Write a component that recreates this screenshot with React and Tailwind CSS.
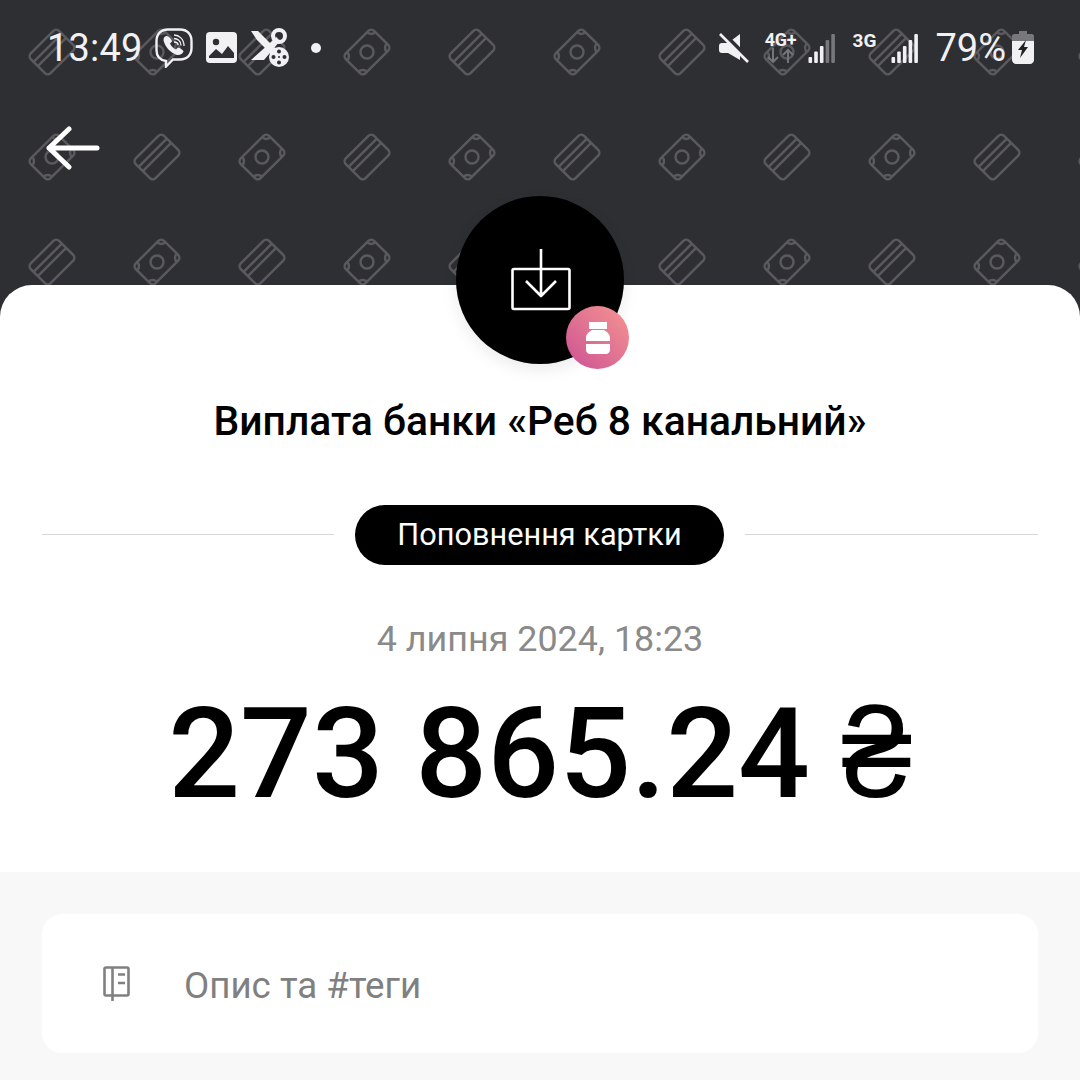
import { useId } from "react";

const ink = "#f1f1f4";

function CardShape({ cx, cy }) {
  return (
    <g transform={`translate(${cx} ${cy}) rotate(-45)`} fill="none" stroke="#59595e" strokeWidth="2.4">
      <rect x="-20" y="-14" width="40" height="28" rx="4" />
      <path d="M-20 -6H20M-20 0H20" />
    </g>
  );
}

function MoneyShape({ cx, cy }) {
  return (
    <g transform={`translate(${cx} ${cy}) rotate(-45)`} fill="none" stroke="#59595e" strokeWidth="2.4">
      <rect x="-20" y="-14" width="40" height="28" rx="4" />
      <circle r="6.500" />
      <path d="M-20 -8A6 6 0 0 0 -14 -14M14 -14A6 6 0 0 0 20 -8M20 8A6 6 0 0 0 14 14M-14 14A6 6 0 0 0 -20 8" />
    </g>
  );
}

function Pattern() {
  const id = useId();
  return (
    <svg className="absolute left-0 top-0 h-[300px] w-full" aria-hidden="true">
      <defs>
        <pattern id={id} width="210" height="210" patternUnits="userSpaceOnUse">
          <CardShape cx={52} cy={52} />
          <MoneyShape cx={157} cy={52} />
          <MoneyShape cx={52} cy={157} />
          <CardShape cx={157} cy={157} />
        </pattern>
      </defs>
      <rect width="100%" height="100%" fill={`url(#${id})`} />
    </svg>
  );
}

function Signal({ dim }) {
  const off = dim ? "#77787b" : ink;
  return (
    <svg width="29" height="30" viewBox="0 0 29 30">
      <rect x="0.500" y="24" width="3.600" height="6" rx="1" fill={ink} />
      <rect x="6.200" y="18.500" width="3.600" height="11.500" rx="1" fill={ink} />
      <rect x="11.900" y="13" width="3.600" height="17" rx="1" fill={ink} />
      <rect x="17.600" y="7" width="3.600" height="23" rx="1" fill={off} />
      <rect x="23.300" y="1" width="3.600" height="29" rx="1" fill={off} />
    </svg>
  );
}

function StatusBar() {
  return (
    <div className="relative flex h-[94px] items-center justify-between pl-[47px] pr-[46px] pt-[1px] text-[#f1f1f4]">
      <div className="flex items-center">
        <span className="text-[38px] leading-none tracking-[0.2px]">13:49</span>
        {/* viber */}
        <svg className="ml-[12px]" width="38" height="40" viewBox="0 0 38 40" fill="none" stroke={ink}>
          <path strokeWidth="2.4" d="M11 33C5 32 1.500 28 1.500 22V13C1.500 6 6 1.500 13 1.500H25C32 1.500 36.500 6 36.500 13V20C36.500 27 32 31.500 25 31.500H18L11 38.500Z" />
          <path fill={ink} stroke="none" d="M11 8C8.500 9 8 11.500 9 14C11 20 16 25 22 27C25 27.500 28 25.500 28.500 23.500C28.700 22.500 24 19 22.800 19.500L21 21.500C18.500 20.500 16 18 15 15.500L17 13.500C17.500 12.500 13.500 7 11 8Z" />
          <path strokeWidth="1.300" d="M19 7C24 7 29 11 29 18M19 10.500C22.500 10.500 26 13 26 17.500M19 14C21 14 23 15 23 17" />
        </svg>
        {/* image */}
        <svg className="ml-[13px]" width="31" height="31" viewBox="0 0 31 31">
          <rect width="31" height="31" rx="4" fill={ink} />
          <circle cx="10" cy="10" r="3.200" fill="#2e2f33" />
          <path d="M3 24L10 17L16 22L22 14L28 21V26H3Z" fill="#2e2f33" />
        </svg>
        {/* scissors with film reel */}
        <svg className="ml-[13px]" width="39" height="41" viewBox="0 0 39 41">
          <path d="M1 4H8L19 15L27 23L22 28L13 19L7 13Z" fill={ink} />
          <path d="M19 17L26 10L30 14L14 33H1Z" fill={ink} />
          <circle cx="29" cy="9" r="6" fill="none" stroke={ink} strokeWidth="4" />
          <circle cx="29" cy="30" r="10" fill={ink} />
          <circle cx="29" cy="24.500" r="2" fill="#2e2f33" />
          <circle cx="23.500" cy="30" r="2" fill="#2e2f33" />
          <circle cx="34.500" cy="30" r="2" fill="#2e2f33" />
          <circle cx="29" cy="35.500" r="2" fill="#2e2f33" />
          <circle cx="29" cy="30" r="1" fill="#2e2f33" />
        </svg>
        <span className="ml-[22px] h-[10px] w-[10px] rounded-full bg-[#f1f1f4]" />
      </div>
      <div className="flex items-center">
        {/* muted */}
        <svg width="30" height="30" viewBox="0 0 30 30">
          <path d="M3 10H9L21 1V27L9 20H3C1 20 0 19 0 17V13C0 11 1 10 3 10Z" fill={ink} />
          <path d="M2 -2L32 28" stroke="#2e2f33" strokeWidth="4" />
          <path d="M1 1L29 29" stroke={ink} strokeWidth="2.600" />
        </svg>
        <div className="ml-[15px] flex w-[34px] flex-col items-center">
          <span className="text-[18px] font-bold leading-[16px] tracking-[-0.3px]">4G+</span>
          <svg width="30" height="15" viewBox="0 0 30 15" fill="none" stroke="#74757a" strokeWidth="2">
            <path d="M7 0V14M2 9L7 14L12 9M22 15V2M17 7L22 2L27 7" />
          </svg>
        </div>
        <div className="ml-[10px]"><Signal dim /></div>
        <span className="mb-[15px] ml-[16px] text-[19px] font-bold leading-none">3G</span>
        <div className="ml-[15px]"><Signal /></div>
        <span className="ml-[15px] text-[38px] leading-none">79%</span>
        {/* battery */}
        <svg className="ml-[6px]" width="22" height="33" viewBox="0 0 22 33">
          <path d="M7 0H15V3H20C21 3 22 4 22 5V10H0V5C0 4 1 3 2 3H7Z" fill="#77787b" />
          <path d="M0 10H22V29C22 31 20 33 18 33H4C2 33 0 31 0 29Z" fill={ink} />
          <path d="M14 9L6 19H10L8 27L16 16H12Z" fill="#222" />
        </svg>
      </div>
    </div>
  );
}

function Avatar() {
  return (
    <div className="absolute left-1/2 top-[-89px] flex h-[168px] w-[168px] -translate-x-1/2 items-center justify-center rounded-full bg-black shadow-[0_6px_16px_rgba(0,0,0,0.08)]">
      <svg className="ml-[2px]" width="60" height="62" viewBox="0 0 60 62" fill="none" stroke="white" strokeWidth="2.600" strokeLinejoin="round">
        <path d="M3 20H57C58 20 58.500 20.500 58.500 21.500V58.500C58.500 59.500 58 60 57 60H3C2 60 1.500 59.500 1.500 58.500V21.500C1.500 20.500 2 20 3 20Z" />
        <path d="M30 0V47M15 32L30 47L45 32" />
      </svg>
      <span className="absolute left-[110px] top-[110px] flex h-[63px] w-[63px] items-center justify-center rounded-full bg-gradient-to-tr from-[#cc4f93] to-[#f5958f]">
        <svg width="24" height="32" viewBox="0 0 24 32" fill="white">
          <path d="M3 0H21V7H3ZM6 8H18C21 10 24 12 24 16V19H0V16C0 12 3 10 6 8ZM0 22H24V28C24 30 22 32 20 32H4C2 32 0 30 0 28Z" />
        </svg>
      </span>
    </div>
  );
}

export default function App() {
  return (
    <div className="relative h-[1080px] overflow-hidden bg-[#2e2f33] font-['Roboto',sans-serif]">
      <Pattern />
      <StatusBar />
      <div className="relative flex h-[191px] items-start pl-[46px] pt-[32px]">
        <svg width="54" height="44" viewBox="0 0 54 44" fill="none" stroke="white" strokeWidth="5" strokeLinecap="round" strokeLinejoin="round">
          <path d="M51 22H3M23 3L3 22L23 41" />
        </svg>
      </div>
      <div className="relative rounded-t-[32px] bg-white">
        <Avatar />
        <div className="flex h-[587px] flex-col items-center">
          <h1 className="mt-[113px] text-[40.800px] font-medium leading-[46px] text-black">Виплата банки «Реб 8 канальний»</h1>
          <div className="mt-[61px] flex w-full items-center gap-[21px] px-[42px]">
            <div className="mb-[2px] h-px w-[292px] bg-[#d6d6d6]" />
            <span className="flex h-[60px] w-[369px] items-center justify-center rounded-full bg-black text-[30.700px] text-white">Поповнення картки</span>
            <div className="mb-[2px] h-px flex-1 bg-[#d6d6d6]" />
          </div>
          <p className="mt-[52px] text-[35.900px] leading-[44px] text-[#8a8a8a]">4 липня 2024, 18:23</p>
          <p className="mt-[18px] text-[126.500px] font-medium leading-[150px] text-black">273 865.24 ₴</p>
        </div>
        <div className="h-[208px] bg-[#f8f8f8] px-[42px] pt-[42px]">
          <div className="flex h-[139px] items-center rounded-[20px] bg-white pl-[61px]">
            <svg width="27" height="35" viewBox="0 0 27 35" fill="none" stroke="#808080" strokeWidth="2.600" strokeLinejoin="round">
              <path d="M3 1.500H24C25 1.500 25.500 2 25.500 3V28C25.500 29 25 29.500 24 29.500H3C2 29.500 1.500 29 1.500 28V3C1.500 2 2 1.500 3 1.500Z" />
              <path d="M9.500 1.500V35M15 8.500H22M15 17H22" />
            </svg>
            <span className="ml-[54px] pt-[5px] text-[36.700px] text-[#808080]">Опис та #теги</span>
          </div>
        </div>
      </div>
    </div>
  );
}
